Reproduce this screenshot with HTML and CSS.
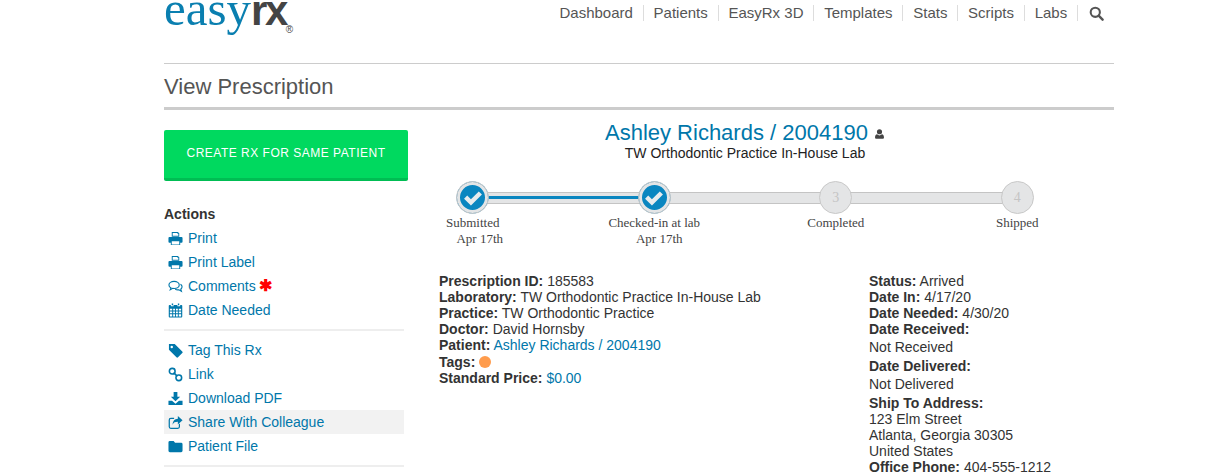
FILE: index.html
```html
<!DOCTYPE html>
<html lang="en">
<head>
    <meta charset="UTF-8">
    <title>View Prescription - EasyRx</title>
    <link rel="stylesheet" href="styles.css">
</head>
<body>

<svg class="icon-defs" width="0" height="0">
    <symbol id="i-print" viewBox="0 0 16 16"><path d="M4 1h6.500L12 2.500V6H4zM5 2v3h6V3h-1V2zM1.500 6.500h13a1 1 0 0 1 1 1v4a1 1 0 0 1-1 1H13v2.500H3V12.500H1.500a1 1 0 0 1-1-1v-4a1 1 0 0 1 1-1zM4 11v3.500h8V11z" fill-rule="evenodd"/></symbol>
    <symbol id="i-comments" viewBox="0 0 16 16"><path d="M6.500 2.500c3 0 5.500 1.600 5.500 3.800s-2.500 3.800-5.500 3.800l-1.500-.1-2.600 1.500.7-2.100C1.600 8.700 1 7.600 1 6.300c0-2.200 2.500-3.800 5.500-3.800z" fill="none" stroke="currentColor" stroke-width="1.200"/><path d="M13.300 5.500c1.100.7 1.700 1.700 1.700 2.800 0 1-.5 1.900-1.400 2.600l.7 2.100-2.700-1.500c-1.400.2-2.800 0-3.900-.6" fill="none" stroke="currentColor" stroke-width="1.200"/></symbol>
    <symbol id="i-calendar" viewBox="0 0 16 16"><path d="M4 .5h1.500v2H4zM10.500.5H12v2h-1.500zM1.800 2H3v1.500h3V2h4v1.500h3V2h1.200a1 1 0 0 1 1 1v11.500a1 1 0 0 1-1 1H1.800a1 1 0 0 1-1-1V3a1 1 0 0 1 1-1zM2 6v2h2.500V6zM5.500 6v2H7.500V6zM8.500 6v2h2V6zM11.500 6v2H14V6zM2 9v2h2.500V9zM5.500 9v2H7.500V9zM8.500 9v2h2V9zM11.500 9v2H14V9zM2 12v2.300h2.500V12zM5.500 12v2.300H7.500V12zM8.500 12v2.300h2V12zM11.500 12v2.300H14V12z" fill-rule="evenodd"/></symbol>
    <symbol id="i-tag" viewBox="0 0 16 16"><path d="M1 1h6.200l8 8a1.200 1.200 0 0 1 0 1.700l-4.500 4.500a1.200 1.200 0 0 1-1.700 0L1 7.200zM4 3a1.300 1.300 0 1 0 0 2.600A1.300 1.300 0 0 0 4 3z" fill-rule="evenodd"/></symbol>
    <symbol id="i-link" viewBox="0 0 16 16"><g fill="none" stroke="currentColor" stroke-width="1.700"><rect x="1.500" y="1.500" width="6" height="6" rx="2.800"/><rect x="8.500" y="8.500" width="6" height="6" rx="2.800"/><path d="M6 6l4 4"/></g></symbol>
    <symbol id="i-download" viewBox="0 0 16 16"><path d="M6 1h4v5h3l-5 5-5-5h3zM.5 10.500h3.800L8 13.500l3.700-3h3.800v4.500H.5z"/></symbol>
    <symbol id="i-share" viewBox="0 0 16 16"><path d="M10.500 1l5 4.500-5 4.500V7.300C7.500 7.300 5.800 8 5 10.500 4.800 6.800 7 4.200 10.500 4zM3 3h3.500v1.300H3a1 1 0 0 0-1 1v7.200a1 1 0 0 0 1 1h7.500a1 1 0 0 0 1-1V10l1.300-1v3.500a2.300 2.300 0 0 1-2.300 2.300H3A2.300 2.300 0 0 1 .7 12.500V5.300A2.300 2.300 0 0 1 3 3z"/></symbol>
    <symbol id="i-folder" viewBox="0 0 16 16"><path d="M2 2h4l1.500 2H14a1.500 1.500 0 0 1 1.500 1.500v7A1.500 1.500 0 0 1 14 14H2A1.500 1.500 0 0 1 .5 12.500v-9A1.500 1.500 0 0 1 2 2z"/></symbol>
    <symbol id="i-user" viewBox="0 0 16 16"><path d="M8 1a3.500 3.500 0 1 1 0 7.500A3.500 3.500 0 0 1 8 1zM4.500 8.500C5.500 9.500 6.700 10 8 10s2.500-.5 3.500-1.500c2 .3 3 2 3 4.500 0 1.300-.8 2-2 2h-9c-1.200 0-2-.7-2-2 0-2.500 1-4.200 3-4.500z"/></symbol>
    <symbol id="i-search" viewBox="0 0 16 16"><circle cx="6.700" cy="6.700" r="4.900" fill="none" stroke="currentColor" stroke-width="2.200"/><path d="M10.300 10.300l4.200 4.200" stroke="currentColor" stroke-width="2.600" stroke-linecap="round"/></symbol>
    <symbol id="i-check" viewBox="0 0 16 16"><path d="M1.500 8.500l2.300-2.300 2.700 2.700 5.700-5.700 2.300 2.300-8 8z"/></symbol>
</svg>

<div class="page">
    <header class="top">
        <div class="logo"><span class="logo-easy">easy</span><span class="logo-rx">rx</span><span class="logo-reg">®</span></div>
        <nav class="nav">
            <a href="#">Dashboard</a>
            <a href="#">Patients</a>
            <a href="#">EasyRx 3D</a>
            <a href="#">Templates</a>
            <a href="#">Stats</a>
            <a href="#">Scripts</a>
            <a href="#">Labs</a>
            <a href="#" class="nav-search"><svg class="nav-icon"><use href="#i-search"/></svg></a>
        </nav>
    </header>

    <h1 class="page-title">View Prescription</h1>

    <div class="columns">
        <aside class="sidebar">
            <a href="#" class="create-btn">CREATE RX FOR SAME PATIENT</a>

            <h4 class="actions-title">Actions</h4>
            <ul class="actions">
                <li><a href="#"><svg><use href="#i-print"/></svg>Print</a></li>
                <li><a href="#"><svg><use href="#i-print"/></svg>Print Label</a></li>
                <li><a href="#"><svg><use href="#i-comments"/></svg>Comments <span class="star">✱</span></a></li>
                <li><a href="#"><svg><use href="#i-calendar"/></svg>Date Needed</a></li>
            </ul>
            <ul class="actions actions-second">
                <li><a href="#"><svg><use href="#i-tag"/></svg>Tag This Rx</a></li>
                <li><a href="#"><svg><use href="#i-link"/></svg>Link</a></li>
                <li><a href="#"><svg><use href="#i-download"/></svg>Download PDF</a></li>
                <li class="hover"><a href="#"><svg><use href="#i-share"/></svg>Share With Colleague</a></li>
                <li><a href="#"><svg><use href="#i-folder"/></svg>Patient File</a></li>
            </ul>
        </aside>

        <main class="rx">
            <div class="rx-head">
                <h2><a href="#">Ashley Richards / 2004190</a> <svg class="user-icon"><use href="#i-user"/></svg></h2>
                <p>TW Orthodontic Practice In-House Lab</p>
            </div>

            <div class="steps">
                <div class="step done">
                    <span class="dot"><svg><use href="#i-check"/></svg></span>
                    <span class="step-name">Submitted</span>
                    <span class="step-date first">Apr 17th</span>
                </div>
                <div class="step done last-done">
                    <span class="dot"><svg><use href="#i-check"/></svg></span>
                    <span class="step-name">Checked-in at lab</span>
                    <span class="step-date second">Apr 17th</span>
                </div>
                <div class="step">
                    <span class="dot">3</span>
                    <span class="step-name">Completed</span>
                </div>
                <div class="step">
                    <span class="dot">4</span>
                    <span class="step-name">Shipped</span>
                </div>
            </div>

            <div class="details">
                <div class="details-left">
                    <div><b>Prescription ID:</b> 185583</div>
                    <div><b>Laboratory:</b> TW Orthodontic Practice In-House Lab</div>
                    <div><b>Practice:</b> TW Orthodontic Practice</div>
                    <div><b>Doctor:</b> David Hornsby</div>
                    <div><b>Patient:</b> <a href="#">Ashley Richards / 2004190</a></div>
                    <div class="tags-row"><b>Tags:</b> <span class="tag-dot"></span></div>
                    <div><b>Standard Price:</b> <a href="#">$0.00</a></div>
                </div>
                <div class="details-right">
                    <div><b>Status:</b> Arrived</div>
                    <div><b>Date In:</b> 4/17/20</div>
                    <div><b>Date Needed:</b> 4/30/20</div>
                    <div class="gap-label"><b>Date Received:</b></div>
                    <div class="gap-value">Not Received</div>
                    <div class="gap-label"><b>Date Delivered:</b></div>
                    <div class="gap-value">Not Delivered</div>
                    <div><b>Ship To Address:</b></div>
                    <div>123 Elm Street</div>
                    <div>Atlanta, Georgia 30305</div>
                    <div>United States</div>
                    <div><b>Office Phone:</b> 404-555-1212</div>
                </div>
            </div>
        </main>
    </div>
</div>

</body>
</html>
```

FILE: styles.css
```css
html, body { height: 475px; overflow: hidden; }
body { margin: 0; background: #fff; color: #333; font-family: "Liberation Sans", Arial, sans-serif; font-size: 14px; line-height: 16px; }
a { color: #0077aa; text-decoration: none; }
svg { fill: currentColor; }
.icon-defs { position: absolute; }

.page { width: 950px; margin-left: 164px; }

.top { display: flex; justify-content: space-between; height: 63px; border-bottom: 1px solid #ccc; }
.logo { margin-top: -21px; height: 60px; line-height: 60px; white-space: nowrap; }
.logo-easy { font-family: "Liberation Serif", serif; font-size: 49px; color: #0a7fb0; }
.logo-rx { font-size: 42px; font-weight: bold; color: #444; letter-spacing: -2.500px; }
.logo-reg { font-size: 10px; color: #444; vertical-align: -8px; margin-left: 0; }

.nav { display: flex; align-items: flex-start; padding-top: 5px; margin-right: 10px; }
.nav a { color: #555; font-size: 15px; line-height: 16px; padding: 0 9.850px; border-right: 1px solid #ddd; height: 16px; }
.nav a:first-child { padding-left: 0; }
.nav a.nav-search { border-right: none; padding-right: 0; padding-left: 11px; }
.nav-icon { width: 15px; height: 15px; margin-top: 1px; }

.page-title { margin: 0; height: 43px; line-height: 45px; font-size: 22px; font-weight: normal; color: #555; border-bottom: 3px solid #ccc; }

.columns { display: flex; margin-top: 20px; }
.sidebar { width: 244px; flex: none; }
.create-btn { display: block; height: 48px; line-height: 47px; border-radius: 2px; border-bottom: 3px solid #00bd53; background: #00d95f; color: #fff; text-align: center; font-size: 12px; letter-spacing: 0.500px; }

.actions-title { margin: 25px 0 0; font-size: 14px; line-height: 16px; font-weight: bold; color: #333; }
.actions { width: 240px; margin: 4px 0 0; padding: 0 0 7px; list-style: none; border-bottom: 2px solid #eee; }
.actions-second { margin-top: 7px; }
.actions li { height: 24px; line-height: 24px; padding-left: 4px; }
.actions li.hover { background: #f2f2f2; }
.actions a { display: flex; align-items: center; height: 24px; }
.actions svg { width: 15px; height: 15px; margin-right: 5px; flex: none; }
.star { color: #f00; font-size: 16px; font-weight: bold; margin-left: 3px; }

.rx { width: 612px; margin-left: 31px; }
.rx-head { text-align: center; margin-top: -10px; }
.rx-head h2 { margin: 0; font-size: 22px; line-height: 26px; font-weight: normal; }
.rx-head p { margin: 0; color: #222; line-height: 15px; }
.user-icon { width: 11px; height: 12px; color: #444; }

.steps { display: flex; margin-top: 20px; margin-left: -57px; }
.step { position: relative; flex: none; width: 181.500px; display: flex; flex-direction: column; align-items: center; font-family: "Liberation Serif", serif; font-size: 13px; line-height: 16px; color: #444; }
.step::before { content: ""; position: absolute; left: 50%; top: 11px; width: 100%; height: 12px; box-sizing: border-box; background: #e4e5e6; border-top: 1px solid #c4c4c4; border-bottom: 1px solid #c4c4c4; }
.step:last-child::before { display: none; }
.step.done::before { background: linear-gradient(#e4e5e6 3px, #0a86c0 3px, #0a86c0 6px, #e4e5e6 6px); }
.step.last-done::before { background: #e4e5e6; }
.dot { position: relative; width: 33px; height: 33px; box-sizing: border-box; display: flex; align-items: center; justify-content: center; border-radius: 50%; background: #e4e5e6; border: 1px solid #c8c8c8; color: #c4c4c4; font-size: 14px; }
.done .dot { background: #0a86c0; box-shadow: inset 0 0 0 3px #e4e5e6; }
.dot svg { width: 22px; height: 22px; color: #e8ecee; }
.step-name { margin-top: 1px; }
.step-date.first { padding-left: 14px; }
.step-date.second { padding-left: 10px; }

.details { display: flex; margin-top: 26px; }
.details-left { width: 430px; flex: none; }
.details-right { white-space: nowrap; }
.details b { color: #333; }
.gap-label { margin-bottom: 2px; }
.gap-value { margin-bottom: 3px; }
.tags-row { margin-top: 1px; }
.tag-dot { display: inline-block; width: 12px; height: 12px; border-radius: 50%; background: #ff9c4d; vertical-align: -1px; }
```
